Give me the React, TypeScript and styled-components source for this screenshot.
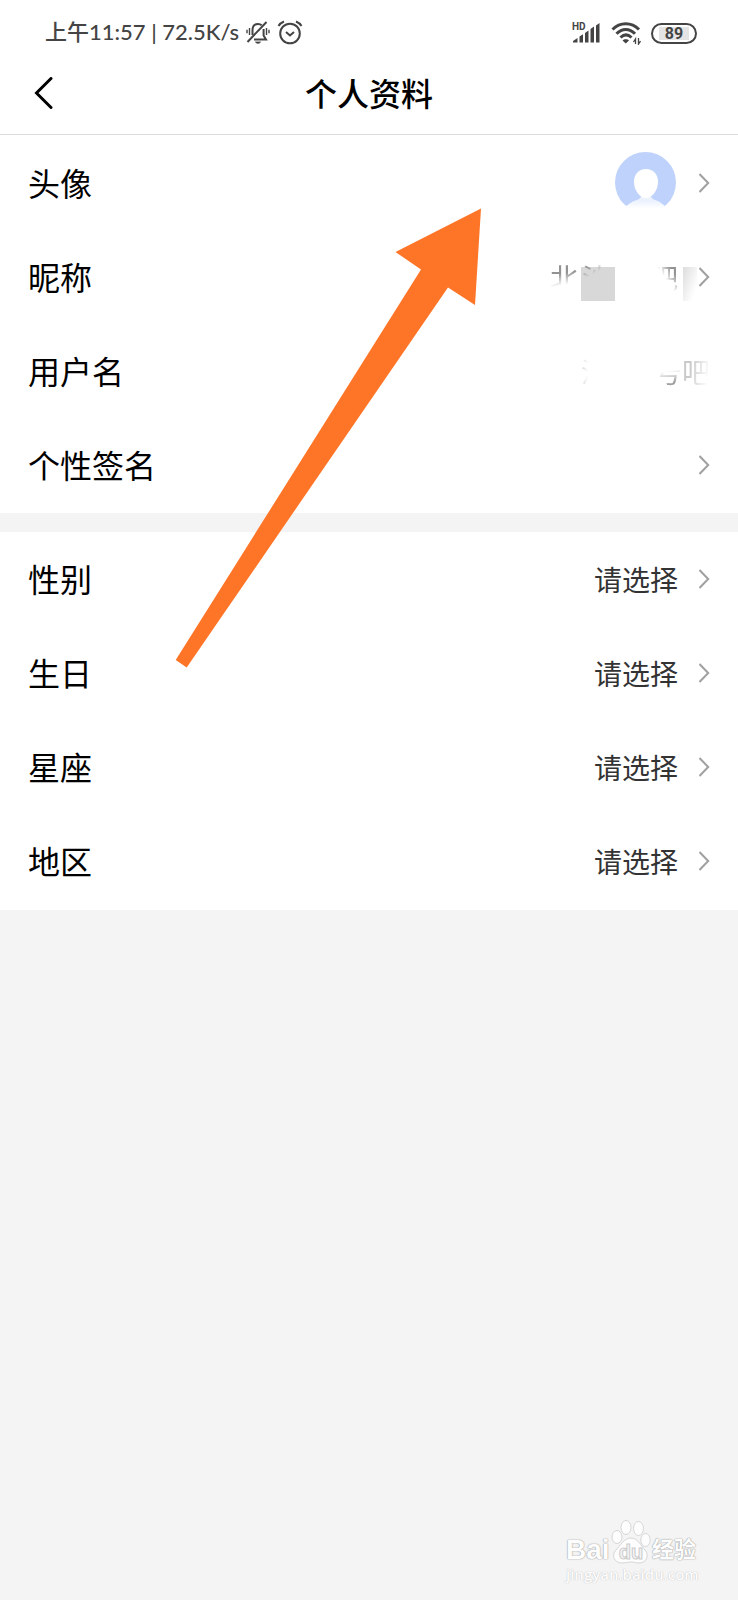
import React from "react";
import styled, { createGlobalStyle } from "styled-components";

const GlobalStyle = createGlobalStyle`
  * { box-sizing: border-box; }
  body {
    margin: 0;
    background: #f4f4f4;
    font-family: "Noto Sans CJK SC", sans-serif;
    color: #000;
  }
`;

const Page = styled.div`
  position: relative;
  min-height: 100vh;
  background: #f4f4f4;
  overflow: hidden;
`;

const StatusBar = styled.div`
  display: flex;
  align-items: center;
  justify-content: space-between;
  height: 52px;
  padding: 14px 41px 0 45px;
  background: #fff;
  color: #444;
`;

const StatusGroup = styled.div<{ $gap: number }>`
  display: flex;
  align-items: center;
  gap: ${(p) => p.$gap}px;
`;

const StatusText = styled.span`
  padding-bottom: 2px;
  font-family: Lato, "Noto Sans CJK SC", sans-serif;
  font-size: 22px;
  line-height: 28px;
  font-weight: 500;
  white-space: pre;
`;

const Battery = styled.span`
  width: 46px;
  height: 21px;
  border: 2px solid #444;
  border-radius: 11px;
  padding: 2px 6px;
  display: flex;
`;

const BatteryLevel = styled.span`
  flex: 1;
  background: #e4e4e4;
  font-family: Roboto, sans-serif;
  font-size: 16px;
  line-height: 13px;
  font-weight: 700;
  text-align: center;
`;

const NavBar = styled.header`
  display: grid;
  grid-template-columns: 60px 1fr 60px;
  align-items: center;
  height: 83px;
  background: #fff;
  border-bottom: 1px solid #dcdcdc;
`;

const BackButton = styled.button`
  display: flex;
  align-items: center;
  height: 60px;
  padding: 0 0 0 34px;
  border: 0;
  background: none;
`;

const Title = styled.h1`
  margin: 0;
  padding-bottom: 2px;
  font-size: 32px;
  line-height: 40px;
  font-weight: 500;
  text-align: center;
`;

const Section = styled.section`
  padding: 1px 0;
  background: #fff;

  & + & {
    margin-top: 19px;
    padding: 0 0 2px;
  }
`;

const Row = styled.button`
  position: relative;
  display: flex;
  align-items: center;
  width: 100%;
  height: 94px;
  padding: 0 28px;
  border: 0;
  background: none;
  font-family: inherit;
  color: inherit;
  text-align: left;
`;

const Label = styled.span`
  flex: 1;
  padding-bottom: 2px;
  font-size: 32px;
  line-height: 40px;
`;

const Value = styled.span`
  display: flex;
  margin-right: 21px;
  font-size: 28px;
  line-height: 36px;
  color: #333;
`;

const ErasedName = styled.span<{ $beforeArrow?: boolean }>`
  display: flex;
  margin-right: ${(p) => (p.$beforeArrow ? 21 : 0)}px;
  font-size: 28px;
  line-height: 36px;
  color: #777;
`;

const Fragment = styled.span<{ $mask: string }>`
  width: 28px;
  mask-image: ${(p) => p.$mask};
`;

const Blank = styled.span<{ $width: number }>`
  width: ${(p) => p.$width}px;
`;

const Patch = styled.span<{ $right: number; $width: number; $fill: string }>`
  position: absolute;
  top: 37px;
  right: ${(p) => p.$right}px;
  width: ${(p) => p.$width}px;
  height: 34px;
  background: ${(p) => p.$fill};
`;

const ArrowOverlay = styled.svg`
  position: absolute;
  top: 208px;
  left: 175px;
  pointer-events: none;
`;

const Watermark = styled.div`
  position: absolute;
  right: 42px;
  bottom: 16px;
  width: 130px;
  color: #fdfdfd;
  font-family: "Liberation Sans", "Noto Sans CJK SC", sans-serif;
`;

const Brand = styled.div`
  display: flex;
  align-items: flex-end;
  justify-content: space-between;
  height: 46px;
  font-weight: 700;
`;

const BrandWord = styled.span<{ $size: number }>`
  font-size: ${(p) => p.$size}px;
  line-height: 28px;
  text-shadow: 0 0 1px #999, 0 0 1px #bbb, 0 0 2px #ccc;
`;

const Domain = styled.div`
  font-family: "Open Sans", sans-serif;
  font-size: 15px;
  line-height: 20px;
  font-weight: 600;
  white-space: nowrap;
  text-shadow: 0 0 1px #bbb, 0 0 1px #ddd;
`;

const Chevron = () => (
  <svg width="11" height="20" viewBox="0 0 11 20" fill="none" stroke="#a0a0a0" strokeWidth="2" aria-hidden="true">
    <path d="M.5 1l8.700 9L.5 19" />
  </svg>
);

const BellOff = () => (
  <svg width="24" height="24" viewBox="0 0 24 24" fill="none" stroke="#444" strokeWidth="2" aria-hidden="true">
    <path d="M6.500 14V9.500C6.500 5.500 8.500 3 12 3c1.500 0 2.800.5 3.700 1.300M17.600 8v6.500l2.400 4H8" />
    <path d="M20.500 1L1.500 21" />
    <path d="M9.500 21h5c-1 1.700-4 1.700-5 0z" fill="#444" strokeWidth="0.800" />
    <path d="M3.500 7v7M1 8.700v3.600M20.500 7v7M23 8.700v3.600" strokeWidth="1.400" />
  </svg>
);

const Alarm = () => (
  <svg width="26" height="26" viewBox="0 0 26 26" fill="none" stroke="#444" strokeWidth="2" aria-hidden="true">
    <circle cx="13" cy="13.500" r="9.800" />
    <path d="M1.500 6C3 3.500 4.500 2.500 7 1.500M24.500 6C23 3.500 21.500 2.500 19 1.500M9 12l4 3.500 4-3.500" />
  </svg>
);

const Signal = () => (
  <svg width="30" height="28" viewBox="0 -3 30 28" fill="#444" aria-hidden="true">
    <text x="1" y="8" fontFamily="Roboto, sans-serif" fontSize="10" fontWeight="700">HD</text>
    <path d="M2 20.500v-1.500l4.500-3v4.500zM8.500 20.500v-6l3.500-2.300v8.300zM14 20.500V11l3.500-2.500v12zM19.500 20.500V7L23 4.500v16zM25 20.500v-17L28.500 1v19.500z" />
  </svg>
);

const Wifi = () => (
  <svg width="30" height="24" viewBox="0 0 30 24" fill="none" stroke="#444" strokeWidth="3" aria-hidden="true">
    <path d="M1.500 8.500c7.500-7.700 19-7.700 26.500 0M5.500 12.800c5.500-5.700 13-5.700 18.500 0M9.500 16.500c3.500-3.300 7.500-3.300 11 0" />
    <path d="M11.500 19.500c1.500-1.800 5.300-1.800 6.500 0L14.800 22.500z" fill="#444" stroke="none" />
    <path d="M24.500 23v-5l-2 3M27.500 17v6l2-3" strokeWidth="1.300" />
  </svg>
);

const AvatarImage = styled.svg`
  margin-right: 23px;
  margin-bottom: 2px;
`;

const Avatar = () => (
  <AvatarImage width="61" height="61" viewBox="0 0 61 61" role="img" aria-label="头像">
    <defs>
      <linearGradient id="shoulders" x1="0" y1="0" x2="0" y2="1">
        <stop offset="0" stopColor="#e6eefe" />
        <stop offset="0.700" stopColor="#fff" />
      </linearGradient>
    </defs>
    <circle cx="30.500" cy="30.500" r="30.500" fill="#bed2fb" />
    <path d="M0 54h61v7H0z" fill="#fff" />
    <path d="M10.500 54.500C18 48.500 24 46.500 31 46.500s13 2 19.500 8L48 61H12z" fill="url(#shoulders)" />
    <path d="M26 41h10v4l3 3H23l3-3z" fill="#edf3fe" />
    <path d="M31 17c7.500 0 12 5.500 12 13 0 8-5.500 16-12 16S19 38 19 30c0-7.500 4.500-13 12-13z" fill="#fff" />
  </AvatarImage>
);

const Paw = () => (
  <svg width="40" height="46" viewBox="0 0 40 46" fill="#fdfdfd" stroke="#d6d6d6" strokeWidth="1" aria-hidden="true">
    <ellipse cx="6" cy="19" rx="5" ry="6.500" />
    <ellipse cx="15" cy="9.500" rx="5" ry="7" />
    <ellipse cx="27.500" cy="10.500" rx="5" ry="7" />
    <ellipse cx="34.500" cy="22" rx="4.700" ry="6.500" />
    <path d="M20 20c7 0 10 8 14 12 5 6 1 13-6 13-4 0-5-1-8-1s-5 1-9 1c-8 0-11-8-6-13 4-4 8-12 15-12z" />
    <text x="20" y="41" textAnchor="middle" fontFamily="Liberation Sans, sans-serif" fontSize="20" fill="#f4f4f4" stroke="#ccc">du</text>
  </svg>
);

const choices = ["性别", "生日", "星座", "地区"];

export default function App() {
  return (
    <Page>
      <GlobalStyle />
      <StatusBar>
        <StatusGroup $gap={7}>
          <StatusText>上午11:57 | 72.5K/s</StatusText>
          <BellOff />
          <Alarm />
        </StatusGroup>
        <StatusGroup $gap={10}>
          <Signal />
          <Wifi />
          <Battery>
            <BatteryLevel>89</BatteryLevel>
          </Battery>
        </StatusGroup>
      </StatusBar>
      <NavBar>
        <BackButton aria-label="返回">
          <svg width="20" height="32" viewBox="0 0 20 32" fill="none" stroke="#000" strokeWidth="3" strokeLinecap="round">
            <path d="M17 1.500L2.500 16 17 30.500" />
          </svg>
        </BackButton>
        <Title>个人资料</Title>
      </NavBar>
      <main>
        <Section>
          <Row>
            <Label>头像</Label>
            <Avatar />
            <Chevron />
          </Row>
          <Row>
            <Label>昵称</Label>
            <Patch $right={123} $width={34} $fill="#d8d8d8" />
            <Patch $right={41} $width={14} $fill="linear-gradient(110deg, #ddd, #fff 80%)" />
            <ErasedName $beforeArrow>
              <Fragment $mask="linear-gradient(170deg, rgba(0,0,0,.8) 40%, transparent 70%)">北</Fragment>
              <Blank $width={4} />
              <Fragment $mask="linear-gradient(150deg, rgba(0,0,0,.7) 20%, transparent 42%)">沙</Fragment>
              <Blank $width={40} />
              <Fragment $mask="linear-gradient(235deg, rgba(0,0,0,.8) 25%, transparent 50%)">吧</Fragment>
            </ErasedName>
            <Chevron />
          </Row>
          <Row>
            <Label>用户名</Label>
            <ErasedName>
              <Fragment $mask="linear-gradient(90deg, rgba(0,0,0,.25) 5%, transparent 25%)">沙</Fragment>
              <Blank $width={45} />
              <Fragment $mask="linear-gradient(170deg, transparent 50%, rgba(0,0,0,.7) 80%)">号</Fragment>
              <Fragment $mask="linear-gradient(100deg, rgba(0,0,0,.4) 30%, transparent 90%)">吧</Fragment>
            </ErasedName>
          </Row>
          <Row>
            <Label>个性签名</Label>
            <Chevron />
          </Row>
        </Section>
        <Section>
          {choices.map((name) => (
            <Row key={name}>
              <Label>{name}</Label>
              <Value>请选择</Value>
              <Chevron />
            </Row>
          ))}
        </Section>
      </main>
      <ArrowOverlay width="307" height="460" viewBox="0 0 307 460" aria-hidden="true">
        <path d="M306 .5L220.500 44l25.500 17.500L.7 452l11 7.500L273 79.500 300 97z" fill="#ff7527" />
      </ArrowOverlay>
      <Watermark>
        <Brand>
          <BrandWord $size={28}>Bai</BrandWord>
          <Paw />
          <BrandWord $size={22}>经验</BrandWord>
        </Brand>
        <Domain>jingyan.baidu.com</Domain>
      </Watermark>
    </Page>
  );
}
